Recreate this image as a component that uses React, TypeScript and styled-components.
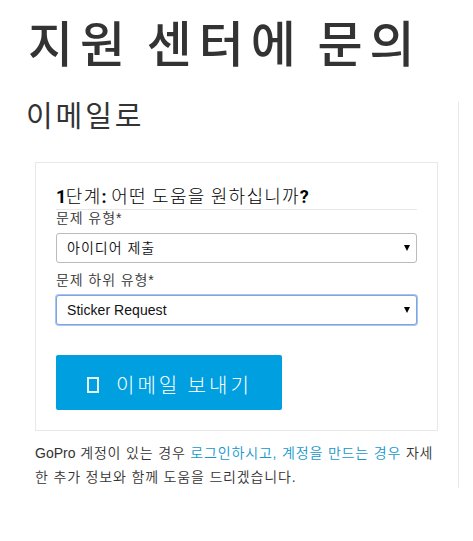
import React from 'react';
import styled, { createGlobalStyle } from 'styled-components';

const GlobalStyle = createGlobalStyle`
  * { box-sizing: border-box; }
  body {
    margin: 0;
    background: #fff;
    color: #333;
    font-family: "Liberation Sans", "Noto Sans CJK KR", sans-serif;
    font-size: 14px;
    font-weight: 350;
  }
`;

const Page = styled.main`
  width: 473px;
  height: 541px;
  padding: 12px 14px 0 26px;
  overflow: hidden;
`;

const Title = styled.h1`
  margin: 0 0 0 2px;
  height: 90px;
  font: 500 49px/58px "Noto Sans CJK KR", sans-serif;
  letter-spacing: 7px;
  word-spacing: -3.5px;
  white-space: nowrap;
`;

const Content = styled.div`
  width: 433px;
  height: 386px;
  border-right: 1px solid #e8e8e8;
`;

const Subtitle = styled.h2`
  margin: 0;
  height: 60px;
  font: 400 29px/24px "Noto Sans CJK KR", sans-serif;
  letter-spacing: 2.9px;
`;

const Panel = styled.form`
  width: 403px;
  height: 269px;
  margin-left: 9px;
  padding: 22px 20px 0;
  border: 1px solid #e8e8e8;
`;

const Step = styled.h3`
  margin: 0;
  height: 25px;
  border-bottom: 1px solid #e8e8e8;
  color: #000;
  font: 300 18px/21px "Noto Sans CJK KR", sans-serif;
  letter-spacing: 1.25px;
  white-space: nowrap;
`;

const Mark = styled.span`
  font: 700 18px/20px Roboto, sans-serif;
  letter-spacing: -0.5px;
`;

const Label = styled.label`
  display: block;
  height: 23px;
  line-height: 17px;
  letter-spacing: 0.9px;
  color: #333;
`;

const SelectBox = styled.div`
  position: relative;
  width: 361px;
  height: 30px;
`;

const Select = styled.select<{ $active?: boolean }>`
  appearance: none;
  display: block;
  width: 100%;
  height: 100%;
  margin: 0;
  padding: 0 30px 0 10px;
  border: 1px solid ${(p) => (p.$active ? '#7fa5e0' : '#bbb')};
  border-radius: 3px;
  box-shadow: ${(p) => (p.$active ? '0 0 0 1px #a9c4ee' : 'none')};
  outline: none;
  background: #fff;
  color: #111;
  font: inherit;
  letter-spacing: ${(p) => (p.$active ? '0.05px' : '1px')};
`;

const Arrow = styled.svg`
  position: absolute;
  right: 7px;
  top: 12px;
  width: 6px;
  height: 6px;
  pointer-events: none;
`;

const SendButton = styled.button`
  display: flex;
  align-items: center;
  gap: 17px;
  width: 226px;
  height: 55px;
  margin: 30px 0 0;
  padding: 4px 0 0 31px;
  border: 0;
  border-radius: 2px;
  background: #009fe0;
  color: #fff;
  font: 300 20px/30px "Noto Sans CJK KR", sans-serif;
  letter-spacing: 3px;
  white-space: nowrap;
`;

const MissingGlyph = styled.span`
  width: 12px;
  height: 16px;
  border: 2px solid #e4f6ff;
`;

const Note = styled.p`
  margin: 10px 0 0 9px;
  line-height: 24px;
  letter-spacing: 0.83px;
  white-space: nowrap;
`;

const Latin = styled.span`
  letter-spacing: 0;
`;

const Link = styled.a`
  color: #1497cc;
`;

const Spacer = styled.div`
  height: 9px;
`;

interface FieldProps {
  value: string;
  active?: boolean;
}

function SelectField({ value, active }: FieldProps) {
  return (
    <SelectBox>
      <Select $active={active} defaultValue={value} aria-label={value}>
        <option>{value}</option>
      </Select>
      <Arrow viewBox="0 0 6 6">
        <path d="M0 0h6L3 6z" fill="#000" />
      </Arrow>
    </SelectBox>
  );
}

export default function App() {
  return (
    <Page>
      <GlobalStyle />
      <Title>지원 센터에 문의</Title>
      <Content>
        <Subtitle>이메일로</Subtitle>
        <Panel>
          <Step>
            <Mark>1</Mark>단계<Mark>:</Mark> 어떤 도움을 원하십니까<Mark>?</Mark>
          </Step>
          <Label>문제 유형*</Label>
          <SelectField value="아이디어 제출" />
          <Spacer />
          <Label>문제 하위 유형*</Label>
          <SelectField value="Sticker Request" active />
          <SendButton type="button">
            <MissingGlyph />
            이메일 보내기
          </SendButton>
        </Panel>
        <Note>
          <Latin>GoPro</Latin> 계정이 있는 경우 <Link>로그인하시고, 계정을 만드는 경우</Link> 자세
          <br />한 추가 정보와 함께 도움을 드리겠습니다.
        </Note>
      </Content>
    </Page>
  );
}
